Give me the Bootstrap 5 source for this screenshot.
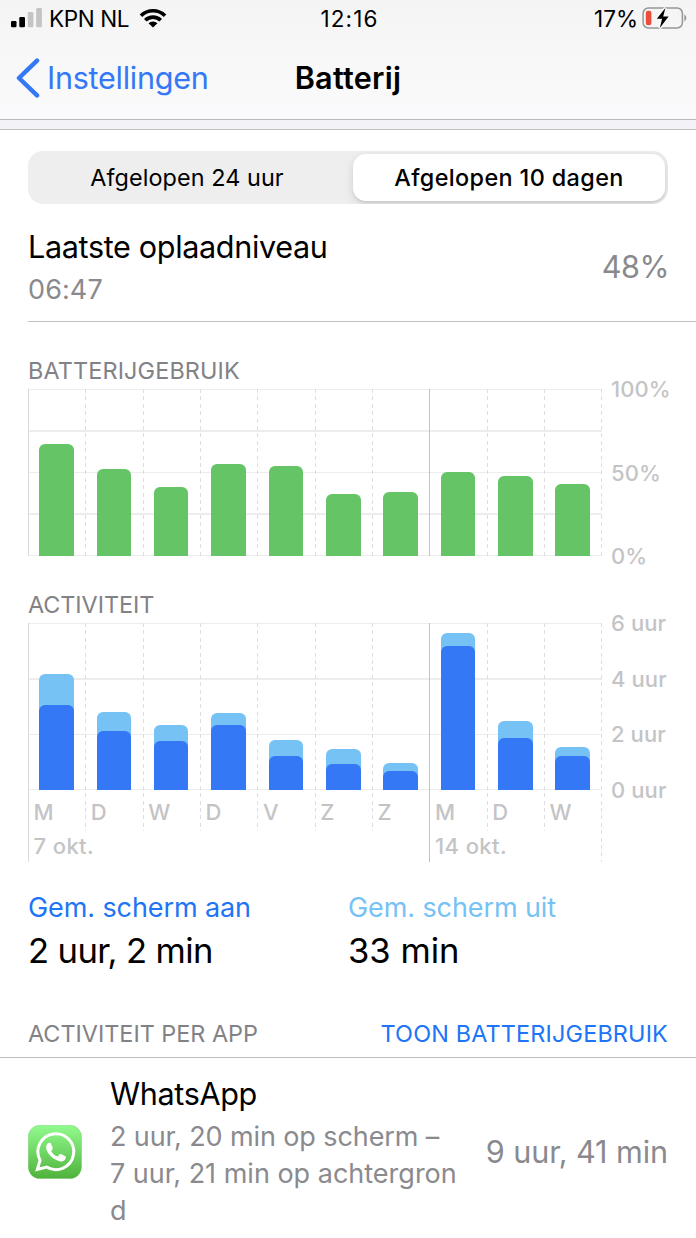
<!DOCTYPE html>
<html lang="nl">
<head>
<meta charset="utf-8">
<meta name="viewport" content="width=device-width, initial-scale=1">
<title>Batterij</title>
<link rel="stylesheet" href="https://cdn.jsdelivr.net/npm/bootstrap@5.3.0/dist/css/bootstrap.min.css">
<style>
  :root { --ios-blue: #3478f6; --ios-sky: #76c2f5; --ios-green: #65c466; --ios-gray: #8a8a8e; --ios-axis: #c4c4c6; --grid-line: #ededee; }
  body { font-family: Inter, "Liberation Sans", sans-serif; color: #000; background: #fff; overflow: hidden; }
  svg { display: block; flex: none; }

  .top-area { height: 120px; background: linear-gradient(#f4f4f4, #f8f8f8 55%, #fafafc); border-bottom: 1px solid #b9b9bb; }
  .status-row { height: 36px; font-size: 22.5px; line-height: 37px; padding: 0 9px 0 11px; }
  .status-row > div { flex: 1 1 0; }
  .carrier { letter-spacing: -.38px; margin: 0 10px 0 6px; }
  .clock { letter-spacing: 1.1px; padding-left: 1px; }
  .title-row { height: 84px; line-height: 84px; font-size: 30.6px; padding-left: 16px; padding-right: 16px; }
  .title-row > * { flex: 1 1 0; }
  .back { color: var(--ios-blue); letter-spacing: -.28px; }
  .back svg { margin-right: 7px; }
  .screen-title { font-weight: 600; letter-spacing: .25px; }
  .group-gap { height: 10px; background: #f2f2f7; border-bottom: 1px solid #c0c0c3; }

  .segments { margin: 21px 28px 0; height: 53px; border-radius: 15px; background: #eee; font-size: 23.4px; line-height: 47px; padding: 3px; overflow: hidden; }
  .segments > div { border-radius: 13px; }
  .segments .first { padding-right: 10px; letter-spacing: .08px; }
  .segments .active { flex: none; width: 312px; background: #fff; font-weight: 500; letter-spacing: .38px; box-shadow: 0 3px 10px rgba(0,0,0,.12), 0 2px 2px rgba(0,0,0,.06); }

  .last-charge { margin-left: 28px; padding: 22px 27px 0 0; height: 118px; border-bottom: 1px solid #c2c2c4; }
  .row-title { font-size: 30.6px; line-height: 42px; letter-spacing: -.36px; }
  .row-sub { font-size: 27px; line-height: 44px; color: var(--ios-gray); letter-spacing: .1px; }
  .row-value { font-size: 30.6px; line-height: 42px; color: var(--ios-gray); letter-spacing: -.5px; margin-top: 20px; }
  .caption-text { font-size: 23.4px; line-height: 30px; color: #828286; text-transform: uppercase; }
  .chart-caption { margin: 34px 0 2px 28px; }

  .chart { margin-left: 28px; height: 168px; }
  .plot { position: relative; width: 573.5px; height: 168px; }
  .plot.quarters { background: repeating-linear-gradient(transparent 0 .6px, var(--grid-line) .6px 2.1px, transparent 2.1px 41.6px); }
  .plot.thirds { background: repeating-linear-gradient(transparent 0 .6px, var(--grid-line) .6px 2.1px, transparent 2.1px 55.5px); }
  .day { flex: 1 1 0; padding-left: 11.2px; position: relative; }
  .day::before, .plot::after { content: ""; position: absolute; left: 0; top: 1px; width: 1px; height: 167px; background: repeating-linear-gradient(#dedee0 0 4px, transparent 4px 7.4px); }
  .plot::after { left: auto; right: 0; }
  .day.week::before { background: #c3c3c5; }
  .day.start::before { background: #dadadc; }
  .tall .day::before { height: 208px; }
  .tall .day.start::before, .tall .day.week::before, .tall::after { height: 239px; }
  .chart-bar { width: 34.6px; border-radius: 6px 6px 0 0; position: relative; z-index: 1; }
  .chart-bar.green { background: var(--ios-green); }
  .chart-bar.sky { background: var(--ios-sky); }
  .chart-bar.blue { background: var(--ios-blue); }
  .axis { font-size: 22px; font-weight: 500; line-height: 30px; color: var(--ios-axis); margin: -14px 0 -15px 9.5px; letter-spacing: .1px; }
  .below { margin-left: 28px; width: 573.5px; font-size: 22px; font-weight: 500; line-height: 30px; color: var(--ios-axis); }
  .below span { flex: 1 1 0; padding-left: 5.5px; }
  .days { padding-top: 7px; }
  .dates { padding-top: 4px; letter-spacing: .4px; }
  .dates .first-week { flex: none; width: 401.5px; }

  .legend-row { margin: 26px 28px 0; }
  .legend-row > div { flex: 1 1 0; }
  .legend-name { font-size: 27px; line-height: 42px; letter-spacing: -.1px; }
  .legend-value { font-size: 34.6px; line-height: 42px; }
  .apps-head { padding: 48px 28px 0; height: 87px; border-bottom: 1px solid #bdbdbf; }
  .apps-head a { color: #2074f6; letter-spacing: .17px; }

  .app-item { padding: 15px 28px 0; }
  .app-icon { margin: 52px 28px 0 0; }
  .app-detail { font-size: 27px; line-height: 37.2px; color: var(--ios-gray); white-space: nowrap; padding-top: 3px; }
  .app-time { font-size: 30.6px; line-height: 42px; color: var(--ios-gray); margin-top: 58px; letter-spacing: -.08px; }
</style>
</head>
<body>
<header class="top-area">
  <div class="status-row d-flex">
    <div class="d-flex align-items-center">
      <svg width="32" height="20" viewBox="0 0 32 20"><rect x="0" y="13" width="5.5" height="6.2" rx="1.2"/><rect x="8.3" y="9" width="5.7" height="10.2" rx="1.2"/><rect x="16.8" y="4" width="5.6" height="15.2" rx="1.2" fill="#c4c4c4"/><rect x="25.2" y="0" width="5.7" height="19.2" rx="1.2" fill="#c4c4c4"/></svg>
      <span class="carrier">KPN NL</span>
      <svg width="28" height="20" viewBox="0 0 29 21"><g fill="none" stroke="#000" stroke-width="3.9"><path d="M1.9 8.1a17.8 17.8 0 0 1 25.2 0"/><path d="M6.4 12.9a11.5 11.5 0 0 1 16.2 0"/></g><path d="M14.5 20.6l-4.7-4.6a6.7 6.7 0 0 1 9.400 0z"/></svg>
    </div>
    <div class="clock text-center">12:16</div>
    <div class="d-flex align-items-center justify-content-end">
      <span>17%</span>
      <svg class="ms-1" width="45" height="22" viewBox="0 0 45 22"><rect x="1.1" y="1.1" width="39.3" height="19.8" rx="5.2" fill="none" stroke="#969696" stroke-width="1.5"/><path d="M42.4 7.3q4 3.7 0 7.4z" fill="#969696"/><rect x="3.8" y="3.8" width="5.6" height="14.4" rx="2.2" fill="#eb4d3d"/><path d="M23.4 1L14.8 11.7h5.3L17.8 21l8.8-11.5h-5.4z" stroke="#f7f7f7" stroke-width="3"/><path d="M23.4 1L14.8 11.7h5.3L17.8 21l8.8-11.5h-5.4z"/></svg>
    </div>
  </div>
  <nav class="title-row d-flex">
    <a class="back d-flex align-items-center text-decoration-none" href="#"><svg width="24" height="40" viewBox="0 0 24 40"><path d="M21 2.6L3 20l18 17.4" fill="none" stroke="#3478f6" stroke-width="4.5" stroke-linecap="round" stroke-linejoin="round"/></svg>Instellingen</a>
    <div class="screen-title text-center">Batterij</div>
    <span></span>
  </nav>
</header>
<div class="group-gap"></div>

<main>
  <div class="segments d-flex text-center">
    <div class="first flex-fill">Afgelopen 24 uur</div>
    <div class="active">Afgelopen 10 dagen</div>
  </div>

  <section class="last-charge d-flex justify-content-between align-items-start">
    <div><div class="row-title">Laatste oplaadniveau</div><div class="row-sub">06:47</div></div>
    <div class="row-value">48%</div>
  </section>

  <h2 class="caption-text chart-caption fw-normal" style="letter-spacing:.15px">Batterijgebruik</h2>
  <div class="chart d-flex">
    <div class="plot quarters d-flex" id="usage"></div>
    <div class="axis d-flex flex-column justify-content-between"><span>100%</span><span>50%</span><span>0%</span></div>
  </div>

  <h2 class="caption-text chart-caption fw-normal" style="letter-spacing:-.05px">Activiteit</h2>
  <div class="chart d-flex">
    <div class="plot thirds tall d-flex" id="activity"></div>
    <div class="axis d-flex flex-column justify-content-between"><span>6 uur</span><span>4 uur</span><span>2 uur</span><span>0 uur</span></div>
  </div>
  <div class="below days d-flex"><span>M</span><span>D</span><span>W</span><span>D</span><span>V</span><span>Z</span><span>Z</span><span>M</span><span>D</span><span>W</span></div>
  <div class="below dates d-flex"><span class="first-week">7 okt.</span><span>14 okt.</span></div>

  <section class="legend-row d-flex">
    <div><div class="legend-name" style="color:#2074f6">Gem. scherm aan</div><div class="legend-value" style="letter-spacing:-.62px">2 uur, 2 min</div></div>
    <div><div class="legend-name" style="color:#76c2f5">Gem. scherm uit</div><div class="legend-value">33 min</div></div>
  </section>

  <div class="apps-head caption-text d-flex justify-content-between"><span>Activiteit per app</span><a class="text-decoration-none" href="#">Toon batterijgebruik</a></div>

  <div class="app-item d-flex align-items-start">
    <svg class="app-icon" width="54" height="54" viewBox="0 0 54 54">
      <defs><linearGradient id="leaf" x1="0" y1="0" x2="0" y2="1"><stop offset="0" stop-color="#92fb8e"/><stop offset="1" stop-color="#4fb23c"/></linearGradient></defs>
      <rect x=".3" y=".3" width="53.2" height="53.2" rx="11.5" fill="url(#leaf)" stroke="#56b34c" stroke-opacity=".5" stroke-width=".6"/>
      <path d="M9.300 44.400l2.800-9.200A17.900 17.900 0 1 1 18.600 42z" fill="none" stroke="#fff" stroke-width="3"/>
      <path d="M18.600 20.200c.3-1.600 1.500-2.600 3-2.500.8 0 1.200.5 1.500 1.300l1.600 3.700c.3.800-.2 1.600-1.600 3.200 1.200 2.500 3.600 4.700 6.600 5.700 1.600-2.300 2.200-2.900 3.200-2.500l4 2c.8.4 1 .8.900 1.600-.4 2.800-3.400 4.200-6.100 3.500-6-1.400-10.600-5.300-12.900-10.600-.7-1.900-.8-3.600-.2-5.400z" fill="#fff"/>
    </svg>
    <div class="flex-fill">
      <div class="row-title">WhatsApp</div>
      <div class="app-detail"><span style="letter-spacing:-.1px">2 uur, 20 min op scherm –</span><br>7 uur, 21 min op achtergron<br>d</div>
    </div>
    <div class="app-time text-nowrap">9 uur, 41 min</div>
  </div>
</main>

<script src="https://cdn.jsdelivr.net/npm/bootstrap@5.3.0/dist/js/bootstrap.bundle.min.js"></script>
<script>
  // Battery use per day, in percent
  const usage = [67, 52, 41, 55, 54, 37, 38, 50, 48, 43];
  // Activity per day, in minutes: total and screen on
  const activity = [[249, 184], [168, 126], [141, 106], [165, 140], [107, 74], [87.5, 57], [59, 41], [338, 311], [148, 112], [92, 74]];
  const mark = i => i === 0 ? ' start' : i === 7 ? ' week' : '';
  const scale = 167.3;
  document.getElementById('usage').innerHTML = usage.map((v, i) =>
    `<div class="day d-flex align-items-end${mark(i)}"><div class="chart-bar green" style="height:${(v / 100 * scale).toFixed(1)}px"></div></div>`).join('');
  document.getElementById('activity').innerHTML = activity.map(([t, s], i) =>
    `<div class="day d-flex align-items-end${mark(i)}"><div class="chart-bar sky d-flex align-items-end" style="height:${(t / 360 * scale).toFixed(1)}px"><div class="chart-bar blue" style="height:${(s / 360 * scale).toFixed(1)}px"></div></div></div>`).join('');
</script>
</body>
</html>
